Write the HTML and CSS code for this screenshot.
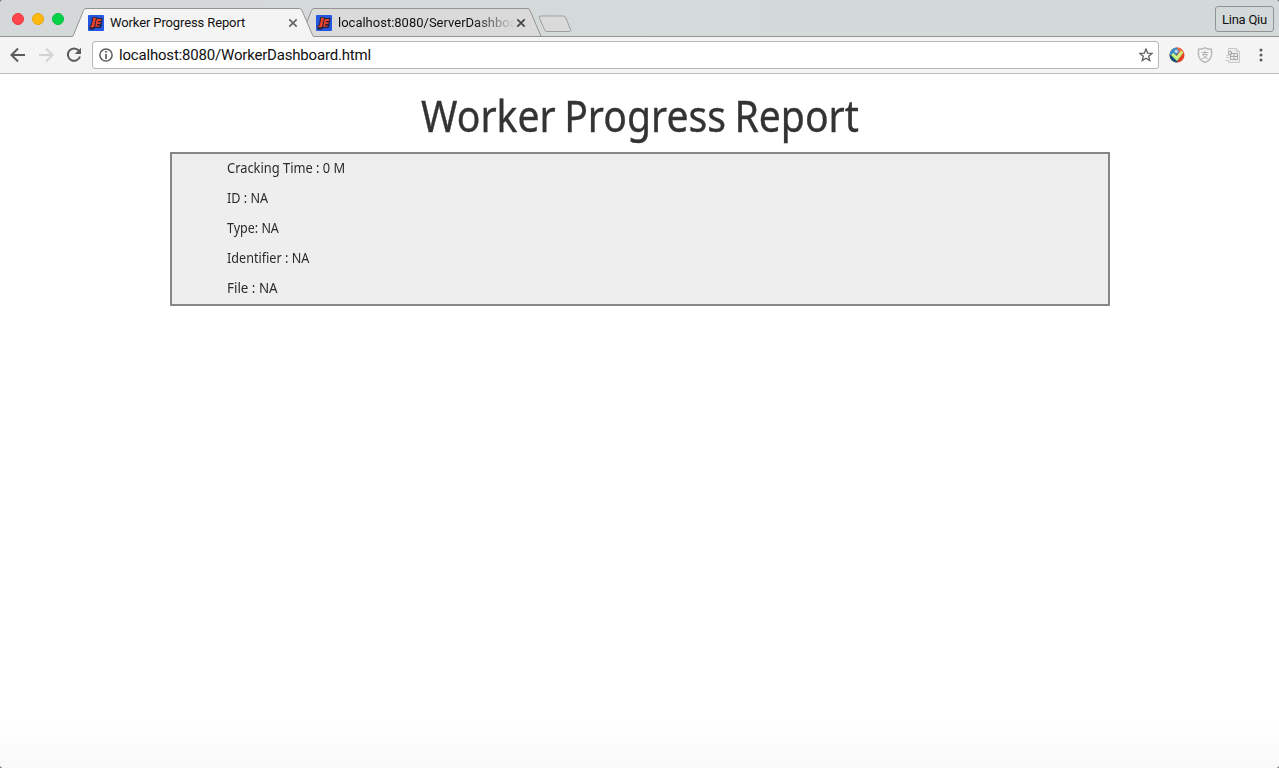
FILE: index.html
```
<!DOCTYPE html>
<html lang="en">
<head>
<meta charset="utf-8">
<title>Worker Progress Report</title>
<link rel="stylesheet" href="styles.css">
</head>
<body>
<svg class="defs" width="0" height="0">
  <symbol id="favicon" viewBox="0 0 16 16">
    <rect width="16" height="16" rx="1" fill="#2456df"/>
    <path d="M4.300 2H8.500L9 3h5.500L14 6.500l-.5 3.700-.8 2.800H7L6 14.500H1.500V10.500L3 9.500z" fill="#20233f"/>
    <path d="M5 2.700h3L6 12.300H2.500v-1.800h1.200L5 4.800zM8.700 4h4.600l-.3 2H10l-.3 1.300h3l-.4 1.800h-3l-.3 1.300h2.600l-.3 1.300H7.200z" fill="#ee412b"/>
  </symbol>
  <symbol id="close" viewBox="0 0 10 10"><path d="M1.300 1.300l7.400 7.400M8.700 1.300L1.300 8.700" stroke="currentColor" stroke-width="1.700" fill="none"/></symbol>
</svg>
<div class="window">
  <header class="tabstrip">
    <div class="lights"><span class="light red"></span><span class="light yellow"></span><span class="light green"></span></div>
    <div class="tab active">
      <svg class="tab-shape" viewBox="0 0 242 29"><path d="M0 29V28.500Q1 28.500 1.500 27L11.500 2.500Q12.300.5 14 .5H227.500Q229.300 .5 230 2.500L240.500 27Q241 28.500 242 28.500V29z" fill="#f4f4f4"/><path d="M0 28.500Q1 28.500 1.500 27L11.500 2.500Q12.300.5 14 .5H227.500Q229.300 .5 230 2.500L240.500 27Q241 28.500 242 28.500" fill="none" stroke="#929494"/></svg>
      <svg class="favicon"><use href="#favicon"/></svg>
      <span class="tab-title title-a">Worker Progress Report</span>
      <svg class="close"><use href="#close"/></svg>
    </div>
    <div class="tab second">
      <svg class="tab-shape" viewBox="0 0 242 29"><path d="M0 28.500Q1 28.500 1.500 27L11.500 2.500Q12.300.5 14 .5H227.500Q229.300 .5 230 2.500L240.500 27Q241 28.500 242 28.500z" fill="#dadada" stroke="#929494"/></svg>
      <svg class="favicon"><use href="#favicon"/></svg>
      <span class="tab-title title-b">localhost:8080/ServerDashboa</span>
      <svg class="close dark"><use href="#close"/></svg>
    </div>
    <svg class="newtab" viewBox="0 0 35 18"><path d="M3 1H25Q27 1 28 3L32.500 14.500Q33.300 16.500 31.500 16.500H9Q7.500 16.500 6.500 14.500L1.500 3.500Q.5 1 3 1z" fill="#dadada" stroke="#9d9f9f"/></svg>
    <div class="profile"><span>Lina Qiu</span></div>
  </header>
  <nav class="toolbar">
    <svg class="nav back" viewBox="0 0 16 16"><path d="M15 8H2M8 1.500L1.500 8 8 14.500" fill="none" stroke="#5c5c5c" stroke-width="2"/></svg>
    <svg class="nav forward" viewBox="0 0 16 16"><path d="M1 8H14M8 1.500L14.500 8 8 14.500" fill="none" stroke="#d3d3d3" stroke-width="2"/></svg>
    <svg class="nav reload" viewBox="0 0 16 16"><path d="M12.800 3.600A6.200 6.200 0 1 0 14 9.500" fill="none" stroke="#5c5c5c" stroke-width="2"/><path d="M15 .8V7H8.800z" fill="#5c5c5c"/></svg>
    <div class="omnibox">
      <svg class="info" viewBox="0 0 14 14"><circle cx="7" cy="7" r="6.100" fill="none" stroke="#5c5c5c" stroke-width="1.500"/><path d="M7 3v1.700M7 6v5" stroke="#5c5c5c" stroke-width="1.700"/></svg>
      <span class="url">localhost:8080/WorkerDashboard.html</span>
      <svg class="star" viewBox="0 0 14 14"><path d="M7 1l1.650 4.050 4.350.35-3.300 2.850L10.750 12.500 7 10.200 3.250 12.500 4.300 8.250 1 5.400l4.350-.35z" fill="none" stroke="#606060" stroke-width="1.300"/></svg>
    </div>
    <div class="extensions">
      <svg viewBox="0 0 16 16"><circle cx="8" cy="8" r="7.500" fill="#e3402a"/><path d="M8 .5A7.500 7.500 0 0 0 .5 8L8 8z" fill="#378fc9"/><path d="M.5 8A7.500 7.500 0 0 0 8 15.500L11 9z" fill="#125276"/><path d="M8 .5Q12 .5 14 3.500L9 8z" fill="#ee7140"/><path d="M2 8L4.500 6l3 3L12.500 3.500l2 2L8 14z" fill="#c9f37f"/><circle cx="7.300" cy="4.300" r="2.300" fill="#b6d3ef" stroke="#266eaf" stroke-width=".7"/></svg>
      <svg viewBox="0 0 16 16"><path d="M8 .8Q11 2.300 14.500 2.300V8Q14 13 8 15.500 2 13 1.500 8V2.300Q5 2.300 8 .8z" fill="#f5f5f5" stroke="#b9b9b9" stroke-width="1.500"/><path d="M4.500 5.500h7M8 3.500v4M5 7.500h5.500Q9 11 4.500 12M6 8q2 3 5.500 4" fill="none" stroke="#b3b3b3"/></svg>
      <svg viewBox="0 0 16 16"><path d="M3.500 4.500V1.500h8L14.500 4.500V15.500H3.500V13" fill="#ececec" stroke="#c8c8c8"/><path d="M11.500 1.500v3h3M1 8.500h3M1 10.500h3M0 13.500h4" fill="none" stroke="#ccc"/><path d="M3.500 4.500h3v3h-3zM5.500 6.500h7v6h-7zM9 6.500V12.500M5.500 9.500h7" fill="none" stroke="#aaa"/></svg>
      <svg class="menu" viewBox="0 0 4 14"><g fill="#5c5c5c"><circle cx="2" cy="2" r="1.500"/><circle cx="2" cy="7" r="1.500"/><circle cx="2" cy="12" r="1.500"/></g></svg>
    </div>
  </nav>
  <main class="page">
    <h1><span>Worker Progress Report</span></h1>
    <section class="report">
      <p class="r1"><span>Cracking Time : 0 M</span></p>
      <p class="r2"><span>ID : NA</span></p>
      <p class="r3"><span>Type: NA</span></p>
      <p class="r4"><span>Identifier : NA</span></p>
      <p class="r5"><span>File : NA</span></p>
    </section>
  </main>
</div>
</body>
</html>
```
FILE: styles.css
```
* { box-sizing: border-box; }
body { margin: 0; background: #777; font-family: Roboto, sans-serif; color: #111; overflow: hidden; }
svg { display: block; flex: none; }
.defs { position: absolute; }
.window { height: 768px; display: flex; flex-direction: column; background: #fff; border-radius: 4px; overflow: hidden; }
.tabstrip { height: 37px; flex: none; display: flex; align-items: flex-end; background: linear-gradient(90deg, #d5d8d8, #d4dada 50%, #d3d8d9); border-bottom: 1px solid #929494; padding-right: 5px; }
.lights { display: flex; gap: 8px; padding: 0 8px 11px 12px; }
.light { width: 12px; height: 12px; border-radius: 50%; }
.red { background: #ff4549; border: 1px solid #e9393e; }
.yellow { background: #ffb90e; border: 1px solid #e9a60b; }
.green { background: #05d347; border: 1px solid #04bb3d; }
.tab { position: relative; isolation: isolate; width: 242px; height: 29px; margin-bottom: -1px; padding: 1px 16px 0 16px; display: flex; align-items: center; flex: none; }
.tab.active { z-index: 2; }
.tab.second { margin-left: -14px; }
.tab-shape { position: absolute; z-index: -1; left: 0; top: 0; width: 242px; height: 29px; }
.favicon { width: 16px; height: 16px; margin-right: 6px; }
.tab-title { flex: 1; width: 0; font-size: 13px; line-height: 18px; white-space: nowrap; letter-spacing: -.12px; }
.title-b { letter-spacing: 0; -webkit-mask-image: linear-gradient(90deg, #000 135px, transparent 178px); mask-image: linear-gradient(90deg, #000 135px, transparent 178px); }
.close { width: 10px; height: 10px; color: #666; }
.close.dark { color: #444; }
.newtab { width: 35px; height: 18px; margin: 0 0 3px -4px; }
.profile { width: 59px; height: 26px; border: 1px solid #929494; border-radius: 3px; margin: 0 0 4px auto; font-size: 13px; letter-spacing: -.25px; display: flex; align-items: center; justify-content: center; white-space: nowrap; }
.toolbar { height: 37px; flex: none; display: flex; align-items: center; background: #f4f4f4; border-bottom: 1px solid #bcbcbc; padding: 0 16px 0 10px; }
.nav { width: 16px; height: 16px; margin-right: 12px; }
.reload { margin-right: 10px; }
.omnibox { width: 1067px; height: 28px; flex: none; background: #fff; border: 1px solid #b7b7b7; border-radius: 3px; display: flex; align-items: center; padding: 0 5px 0 6px; }
.info { width: 14px; height: 14px; margin-right: 6px; }
.url { font-size: 15px; letter-spacing: -.19px; }
.star { width: 14px; height: 14px; margin-left: auto; }
.extensions { display: flex; align-items: center; gap: 12px; margin-left: 10px; }
.extensions svg { width: 16px; height: 16px; }
.extensions .menu { width: 4px; height: 14px; margin-left: 6px; }
.page { flex: 1; background: linear-gradient(#fff 0, #fff calc(100% - 45px), #f9f9f9); font-family: "Noto Sans", sans-serif; color: #333; }
.page span { display: inline-block; white-space: nowrap; }
h1 { margin: 0; padding-top: 11px; height: 78px; font-size: 44px; font-weight: 400; line-height: 60px; text-align: center; word-spacing: -2px; -webkit-text-stroke: .35px #333; }
h1 span { transform: scaleX(.89); }
.report { width: 940px; height: 154px; margin: 0 auto 0 170px; padding-left: 54.600px; background: #eee; border: 2px solid #878787; }
.report p { margin: 0; height: 30px; line-height: 29px; font-size: 13.500px; color: #2b2b2b; }
.report span { transform-origin: left; transform: scaleX(.953); }
.report .r2 span, .report .r4 span { transform: scaleX(.935); }
.report .r3 span { transform: scaleX(.925); }
.report .r5 span { transform: scaleX(.99); }
```
